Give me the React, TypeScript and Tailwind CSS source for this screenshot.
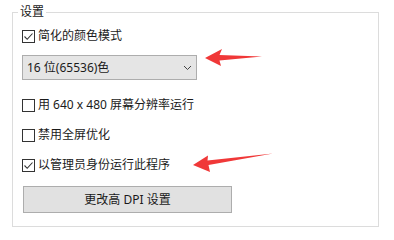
import React from 'react';

const font = "font-['Noto_Sans','Noto_Sans_CJK_SC',sans-serif]";

function CheckRow({ label, checked }: { label: string; checked?: boolean }) {
    return (
        <label className="flex h-[20px] items-center gap-[3px]">
            <span className="flex h-[13px] w-[13px] items-center justify-center border border-[#333333] bg-white">
                {checked && (
                    <svg width="11" height="11" viewBox="0 0 11 11">
                        <path d="M1.5 5.5 L4.2 8.3 L9.5 2.5" fill="none" stroke="#333333" strokeWidth="1.1" />
                    </svg>
                )}
            </span>
            <span className="text-[12px] leading-[16px] text-[#1a1a1a]">{label}</span>
        </label>
    );
}

export default function App() {
    return (
        <div className={`relative h-[231px] w-[394px] overflow-hidden bg-white pt-[4px] ${font}`}>
            <fieldset className="ml-[12px] w-[367px] border border-[#dcdcdc] pl-[9px] pt-[6px] pb-[13px]">
                <legend className="-ml-[4px] px-[2px] text-[12px] leading-[16px] text-[#1a1a1a]">设置</legend>

                <CheckRow label="简化的颜色模式" checked />

                <div className="mt-[9px] flex h-[25px] w-[175px] items-center justify-between border border-[#adadad] bg-[#e5e5e5] pl-[4px] pr-[4px]">
                    <span className="text-[12px] leading-[16px] text-[#1a1a1a]">16 位(65536)色</span>
                    <svg width="9" height="6" viewBox="0 0 9 6">
                        <path d="M1 1 L4.5 4.5 L8 1" fill="none" stroke="#444444" strokeWidth="1" />
                    </svg>
                </div>

                <div className="mt-[15px] flex flex-col gap-[10px]">
                    <CheckRow label="用 640 x 480 屏幕分辨率运行" />
                    <CheckRow label="禁用全屏优化" />
                    <CheckRow label="以管理员身份运行此程序" checked />
                </div>

                <button className="ml-[1px] mt-[11px] flex h-[27px] w-[209px] items-center justify-center border border-[#adadad] bg-[#e1e1e1] text-[12px] leading-[16px] text-[#1a1a1a]">
                    更改高 DPI 设置
                </button>
            </fieldset>

            {/* annotation arrows */}
            <svg className="pointer-events-none absolute inset-0" width="394" height="231" viewBox="0 0 394 231">
                <path d="M205 58 L222 49 L219.5 55 L262 56.5 L219.5 60.5 L221 66 Z" fill="#f03838" />
                <path d="M193 165 L208 155.5 L207.5 160.5 L273 153.5 L208.5 165 L210 172 Z" fill="#f03838" />
            </svg>
        </div>
    );
}
